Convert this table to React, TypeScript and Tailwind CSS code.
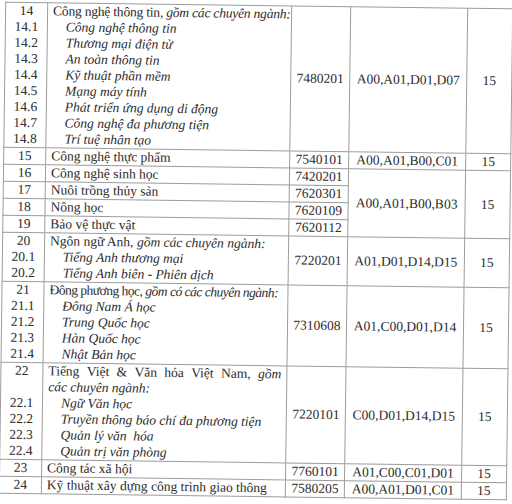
import React from 'react';

const cell = 'border border-[#9c9c9c] p-0 align-middle whitespace-nowrap';

const Sub = ({ children }: { children: React.ReactNode }) => (
  <div className="pl-[13px] italic">{children}</div>
);

const Nums = ({ items }: { items: string[] }) => (
  <>
    {items.map((n) => (
      <div key={n}>{n}</div>
    ))}
  </>
);

const App = () => {
  return (
    <div className="w-[512px] h-[504px] bg-white overflow-hidden pt-[5px] pl-[2px]">
      <table
        className="w-[507px] table-fixed border-collapse rotate-[0.75deg] text-[13.5px] leading-[16px] text-[#2b2b2b]"
        style={{ fontFamily: '"Liberation Serif", "Times New Roman", serif' }}
      >
        <colgroup>
          <col className="w-[42px]" />
          <col className="w-[244px]" />
          <col className="w-[59px]" />
          <col className="w-[117px]" />
          <col className="w-[45px]" />
        </colgroup>
        <tbody>
          {/* 14 */}
          <tr>
            <td className={`${cell} text-center`}>
              <Nums items={['14', '14.1', '14.2', '14.3', '14.4', '14.5', '14.6', '14.7', '14.8']} />
            </td>
            <td className={`${cell} pl-[5px]`}>
              <div className="tracking-[-0.2px]">
                Công nghệ thông tin, <i>gồm các chuyên ngành:</i>
              </div>
              <Sub>Công nghệ thông tin</Sub>
              <Sub>Thương mại điện tử</Sub>
              <Sub>An toàn thông tin</Sub>
              <Sub>Kỹ thuật phần mềm</Sub>
              <Sub>Mạng máy tính</Sub>
              <Sub>Phát triển ứng dụng di động</Sub>
              <Sub>Công nghệ đa phương tiện</Sub>
              <Sub>Trí tuệ nhân tạo</Sub>
            </td>
            <td className={`${cell} text-center`}>7480201</td>
            <td className={`${cell} text-center`}>A00,A01,D01,D07</td>
            <td className={`${cell} text-center`}>15</td>
          </tr>

          {/* 15 */}
          <tr>
            <td className={`${cell} text-center`}>15</td>
            <td className={`${cell} pl-[5px]`}>Công nghệ thực phẩm</td>
            <td className={`${cell} text-center`}>7540101</td>
            <td className={`${cell} text-center`}>A00,A01,B00,C01</td>
            <td className={`${cell} text-center`}>15</td>
          </tr>

          {/* 16 - 19 */}
          <tr>
            <td className={`${cell} text-center`}>16</td>
            <td className={`${cell} pl-[5px]`}>Công nghệ sinh học</td>
            <td className={`${cell} text-center`}>7420201</td>
            <td rowSpan={4} className={`${cell} text-center`}>
              A00,A01,B00,B03
            </td>
            <td rowSpan={4} className={`${cell} text-center`}>
              15
            </td>
          </tr>
          <tr>
            <td className={`${cell} text-center`}>17</td>
            <td className={`${cell} pl-[5px]`}>Nuôi trồng thủy sản</td>
            <td className={`${cell} text-center`}>7620301</td>
          </tr>
          <tr>
            <td className={`${cell} text-center`}>18</td>
            <td className={`${cell} pl-[5px]`}>Nông học</td>
            <td className={`${cell} text-center`}>7620109</td>
          </tr>
          <tr>
            <td className={`${cell} text-center`}>19</td>
            <td className={`${cell} pl-[5px]`}>Bảo vệ thực vật</td>
            <td className={`${cell} text-center`}>7620112</td>
          </tr>

          {/* 20 */}
          <tr>
            <td className={`${cell} text-center`}>
              <Nums items={['20', '20.1', '20.2']} />
            </td>
            <td className={`${cell} pl-[5px]`}>
              <div>
                Ngôn ngữ Anh, <i>gồm các chuyên ngành:</i>
              </div>
              <Sub>Tiếng Anh thương mại</Sub>
              <Sub>Tiếng Anh biên - Phiên dịch</Sub>
            </td>
            <td className={`${cell} text-center`}>7220201</td>
            <td className={`${cell} text-center`}>A01,D01,D14,D15</td>
            <td className={`${cell} text-center`}>15</td>
          </tr>

          {/* 21 */}
          <tr>
            <td className={`${cell} text-center`}>
              <Nums items={['21', '21.1', '21.2', '21.3', '21.4']} />
            </td>
            <td className={`${cell} pl-[5px]`}>
              <div className="tracking-[-0.5px]">
                Đông phương học, <i>gồm có các chuyên ngành:</i>
              </div>
              <Sub>Đông Nam Á học</Sub>
              <Sub>Trung Quốc học</Sub>
              <Sub>Hàn Quốc học</Sub>
              <Sub>Nhật Bản học</Sub>
            </td>
            <td className={`${cell} text-center`}>7310608</td>
            <td className={`${cell} text-center`}>A01,C00,D01,D14</td>
            <td className={`${cell} text-center`}>15</td>
          </tr>

          {/* 22 */}
          <tr>
            <td className={`${cell} text-center`}>
              <Nums items={['22', '\u00a0', '22.1', '22.2', '22.3', '22.4']} />
            </td>
            <td className={`${cell} px-[5px]`}>
              <div className="flex justify-between">
                <span>Tiếng</span>
                <span>Việt</span>
                <span>&amp;</span>
                <span>Văn</span>
                <span>hóa</span>
                <span>Việt</span>
                <span>Nam,</span>
                <i>gồm</i>
              </div>
              <div className="italic">các chuyên ngành:</div>
              <Sub>Ngữ Văn học</Sub>
              <Sub>Truyền thông báo chí đa phương tiện</Sub>
              <Sub>Quản lý văn&nbsp; hóa</Sub>
              <Sub>Quản trị văn phòng</Sub>
            </td>
            <td className={`${cell} text-center`}>7220101</td>
            <td className={`${cell} text-center`}>C00,D01,D14,D15</td>
            <td className={`${cell} text-center`}>15</td>
          </tr>

          {/* 23 */}
          <tr>
            <td className={`${cell} text-center`}>23</td>
            <td className={`${cell} pl-[5px]`}>Công tác xã hội</td>
            <td className={`${cell} text-center`}>7760101</td>
            <td className={`${cell} text-center`}>A01,C00,C01,D01</td>
            <td className={`${cell} text-center`}>15</td>
          </tr>

          {/* 24 */}
          <tr>
            <td className={`${cell} text-center`}>24</td>
            <td className={`${cell} pl-[5px]`}>Kỹ thuật xây dựng công trình giao thông</td>
            <td className={`${cell} text-center`}>7580205</td>
            <td className={`${cell} text-center`}>A00,A01,D01,C01</td>
            <td className={`${cell} text-center`}>15</td>
          </tr>
        </tbody>
      </table>
    </div>
  );
};

export default App;
